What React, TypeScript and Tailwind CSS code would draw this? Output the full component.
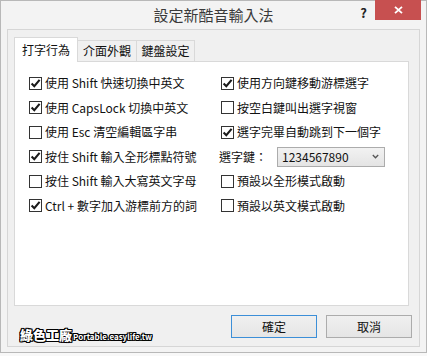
import React from "react";

const FONT = { fontFamily: '"Noto Sans CJK TC", "Noto Sans", sans-serif' };

function Box({ checked }: { checked: boolean }) {
  return (
    <span className="w-[13px] h-[13px] border border-[#333333] bg-white flex items-center justify-center shrink-0">
      {checked && (
        <svg width="11" height="11" viewBox="0 0 11 11">
          <path d="M1.6 5.4 L4.3 8.2 L9.6 1.8" stroke="#1a1a1a" strokeWidth="2.1" fill="none" />
        </svg>
      )}
    </span>
  );
}

function Row({ checked, label }: { checked: boolean; label: string }) {
  return (
    <div className="h-[24.5px] flex items-center gap-[3px]">
      <Box checked={checked} />
      <span className="text-[12px] leading-[14px] text-[#111111] whitespace-nowrap">{label}</span>
    </div>
  );
}

export default function App() {
  return (
    <div className="w-[427px] h-[356px] bg-[#f8f8f8] overflow-hidden" style={FONT}>
      <div className="w-[427px] h-[353px] border border-[#b8b8b8] bg-[#f3f3f3] flex flex-col">
        {/* title bar */}
        <div className="h-[28px] relative flex items-start justify-end shrink-0">
          <div className="absolute left-0 right-0 top-[5px] text-center text-[15px] leading-[18px] text-[#3a3a3a]">
            設定新酷音輸入法
          </div>
          <span className="mt-[5px] mr-[8px] text-[13px] leading-[14px] font-bold text-[#222222]">?</span>
          <div className="w-[46px] h-[20px] mt-[-1px] mr-[5px] bg-[#c75050] flex items-center justify-center">
            <svg width="9" height="8" viewBox="0 0 9 8">
              <path d="M1 0.8 L8 7.2 M8 0.8 L1 7.2" stroke="#ffffff" strokeWidth="1.8" fill="none" />
            </svg>
          </div>
        </div>
        {/* client */}
        <div className="mx-[6px] h-[318px] border border-[#d6d6d6] bg-[#f0f0f0] flex flex-col relative">
          <div className="pl-[6px] pt-[7px]">
            {/* tabs */}
            <div className="flex items-end h-[24px]">
              <div className="w-[64px] h-[25px] mb-[-1px] bg-white border border-b-0 border-[#d9d9d9] relative z-10 flex items-center justify-center text-[12px] leading-[14px] text-[#111111] pb-[1px]">
                打字行為
              </div>
              <div className="w-[59px] h-[21px] bg-[#f0f0f0] border border-b-0 border-l-0 border-[#d9d9d9] flex items-center justify-center text-[12px] leading-[14px] text-[#111111]">
                介面外觀
              </div>
              <div className="w-[58px] h-[21px] bg-[#f0f0f0] border border-b-0 border-l-0 border-[#d9d9d9] flex items-center justify-center text-[12px] leading-[14px] text-[#111111]">
                鍵盤設定
              </div>
            </div>
            {/* panel */}
            <div className="w-[395px] h-[245px] bg-white border border-[#d9d9d9] pt-[9px] pl-[14px] grid grid-cols-[192px_1fr] content-start">
              <div className="flex flex-col">
                <Row checked label="使用 Shift 快速切換中英文" />
                <Row checked label="使用 CapsLock 切換中英文" />
                <Row checked={false} label="使用 Esc 清空編輯區字串" />
                <Row checked label="按住 Shift 輸入全形標點符號" />
                <Row checked={false} label="按住 Shift 輸入大寫英文字母" />
                <Row checked label="Ctrl + 數字加入游標前方的詞" />
              </div>
              <div className="flex flex-col">
                <Row checked label="使用方向鍵移動游標選字" />
                <Row checked={false} label="按空白鍵叫出選字視窗" />
                <Row checked label="選字完畢自動跳到下一個字" />
                <div className="h-[24.5px] flex items-center ml-[-2px]">
                  <span className="w-[58px] text-[12px] leading-[14px] text-[#111111] whitespace-nowrap">選字鍵：</span>
                  <div className="w-[108px] h-[20px] border border-[#acacac] bg-gradient-to-b from-[#f2f2f2] to-[#e4e4e4] flex items-center pl-[4px] pr-[5px] justify-between">
                    <span className="text-[12px] leading-[14px] text-[#111111]">1234567890</span>
                    <svg width="7" height="5" viewBox="0 0 7 5">
                      <path d="M0.8 1 L3.5 3.8 L6.2 1" stroke="#555555" strokeWidth="1.3" fill="none" />
                    </svg>
                  </div>
                </div>
                <Row checked={false} label="預設以全形模式啟動" />
                <Row checked={false} label="預設以英文模式啟動" />
              </div>
            </div>
          </div>
          {/* buttons */}
          <div className="flex justify-end gap-[9px] pr-[7px] pt-[9px]">
            <button className="w-[86px] h-[23px] border border-[#3c8fd8] bg-gradient-to-b from-[#f0f0f0] to-[#e5e5e5] text-[12px] leading-[14px] text-[#111111]">
              確定
            </button>
            <button className="w-[86px] h-[23px] border border-[#acacac] bg-gradient-to-b from-[#f0f0f0] to-[#e5e5e5] text-[12px] leading-[14px] text-[#111111]">
              取消
            </button>
          </div>
          {/* watermark */}
          <div className="absolute left-[12px] top-[297px] flex items-end gap-[1px]">
            <span className="text-[13px] leading-[15px] font-black text-white [text-shadow:1px_0_0_#000,-1px_0_0_#000,0_1px_0_#000,0_-1px_0_#000,1px_1px_0_#000,-1px_-1px_0_#000,1px_-1px_0_#000,-1px_1px_0_#000]">
              綠色工廠
            </span>
            <span className="text-[8px] leading-[9px] font-bold text-white mb-[1px] [text-shadow:1px_0_0_#000,-1px_0_0_#000,0_1px_0_#000,0_-1px_0_#000,1px_1px_0_#000,-1px_-1px_0_#000,1px_-1px_0_#000,-1px_1px_0_#000]">
              Portable.easylife.tw
            </span>
          </div>
        </div>
      </div>
    </div>
  );
}
